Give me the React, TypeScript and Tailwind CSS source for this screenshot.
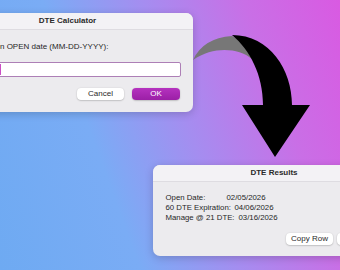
export default function App() {
  return (
    <div
      className="relative w-[340px] h-[270px] overflow-hidden bg-[linear-gradient(70deg,#6eaaf2_0%,#7aacf5_32%,#a58df0_55%,#c96fe6_78%,#d95ae2_100%)]"
      style={{ fontFamily: '"Liberation Sans", Arial, sans-serif' }}
    >
      {/* input window */}
      <div className="absolute left-[-58px] top-[13px] w-[251px] h-[99px] rounded-[7px] bg-[#ecebee] shadow-[0_2px_8px_rgba(0,0,0,0.18)] overflow-hidden flex flex-col">
        <div className="h-[17px] flex items-center justify-center text-[8px] font-bold text-[#2a2a2a] bg-[#f3f2f5] border-b border-[#dedce1]">
          DTE Calculator
        </div>
        <div className="flex flex-col pl-[13.5px] pr-[12px] pt-[11px]">
          <div className="h-[12px] leading-[12px] text-[8px] text-[#262626] whitespace-nowrap">
            Enter position OPEN date (MM-DD-YYYY):
          </div>
          <div className="mt-[9px] h-[15px] flex items-center bg-white border-[1.5px] border-[#ad7fb6] rounded-[2px]">
            <div className="ml-[43px] w-[1.5px] h-[11px] bg-[#c94fc4]" />
          </div>
          <div className="mt-[11px] flex justify-end gap-[8px] pr-[1px]">
            <button className="w-[47px] h-[12px] rounded-[4px] bg-white text-[8px] leading-[12px] text-[#2a2a2a] shadow-[0_0.5px_1.5px_rgba(0,0,0,0.3)]">
              Cancel
            </button>
            <button className="w-[48px] h-[12px] rounded-[4px] bg-[linear-gradient(#b532bf,#9b1fa6)] text-[8px] leading-[12px] text-white shadow-[0_0.5px_1.5px_rgba(0,0,0,0.3)]">
              OK
            </button>
          </div>
        </div>
      </div>

      {/* curved arrow */}
      <svg className="absolute inset-0 pointer-events-none" width="340" height="270" viewBox="0 0 340 270">
        <path d="M193,60 Q203,38 232,36 C241,40 248,50 252,59 C238,48 214,46 193,60 Z" fill="#777777" />
        <path d="M232,35 C270,35 292,70 292,105 L310,105 L275,157 L242,105 L263,105 C263,75 250,50 232,35 Z" fill="#000" />
      </svg>

      {/* results window */}
      <div className="absolute left-[153px] top-[165px] w-[242px] h-[91px] rounded-[7px] bg-[#ecebee] shadow-[0_2px_8px_rgba(0,0,0,0.18)] overflow-hidden flex flex-col">
        <div className="h-[17px] flex items-center justify-center text-[8px] font-bold text-[#2a2a2a] bg-[#f3f2f5] border-b border-[#dedce1]">
          DTE Results
        </div>
        <div className="flex flex-col pl-[12.5px] pr-[10px] pt-[11px] text-[7.8px] leading-[10px] text-[#262626] whitespace-nowrap">
          <div className="flex">
            <span className="w-[61px] shrink-0">Open Date:</span>
            <span>02/05/2026</span>
          </div>
          <div className="flex">
            <span className="w-[69px] shrink-0">60 DTE Expiration:</span>
            <span>04/06/2026</span>
          </div>
          <div className="flex">
            <span className="w-[73px] shrink-0">Manage @ 21 DTE:</span>
            <span>03/16/2026</span>
          </div>
          <div className="mt-[10px] flex justify-end gap-[4px]">
            <button className="w-[47px] h-[12px] rounded-[4px] bg-white text-[8px] leading-[12px] text-[#2a2a2a] shadow-[0_0.5px_1.5px_rgba(0,0,0,0.3)]">
              Copy Row
            </button>
            <button className="w-[48px] h-[12px] rounded-[4px] bg-white text-[8px] leading-[12px] text-[#2a2a2a] shadow-[0_0.5px_1.5px_rgba(0,0,0,0.3)]">
              Done
            </button>
          </div>
        </div>
      </div>
    </div>
  );
}
